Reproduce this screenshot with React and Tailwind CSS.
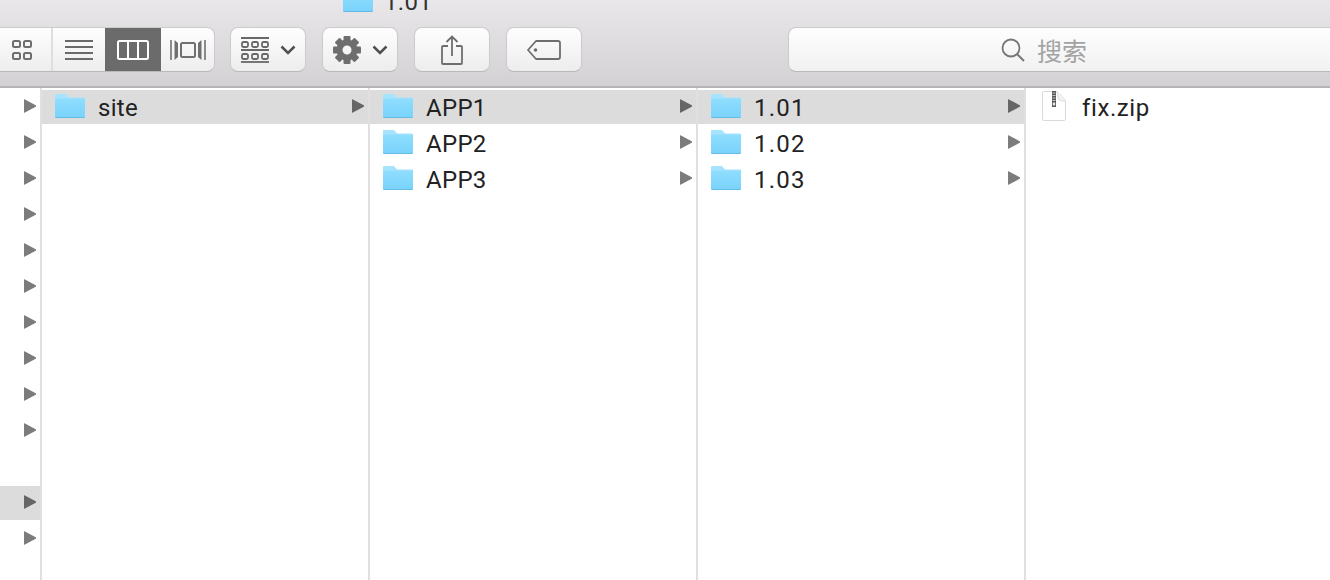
import React from "react";

const sans = "font-['Roboto',Arial,sans-serif]";

const FolderIcon = () => (
  <svg width="30" height="24" viewBox="0 0 30 24" className="mb-[2px] shrink-0">
    <defs>
      <linearGradient id="folderBody" x1="0" y1="0" x2="0" y2="1">
        <stop offset="0" stopColor="#8fdefe" />
        <stop offset="1" stopColor="#79d2fc" />
      </linearGradient>
    </defs>
    <path d="M1 0h10l3 3.500h15a1 1 0 0 1 1 1v18a1 1 0 0 1-1 1H1a1 1 0 0 1-1-1V1a1 1 0 0 1 1-1z" fill="#a6e4fd" />
    <path d="M0 4.500h30v18a1.500 1.500 0 0 1-1.500 1.500H1.500A1.500 1.500 0 0 1 0 22.500z" fill="url(#folderBody)" />
    <path d="M.5 23.500h29" stroke="#64bbe6" strokeWidth="1" />
  </svg>
);

const ZipIcon = () => (
  <svg width="24" height="30" viewBox="0 0 24 30" className="mb-[2px] shrink-0">
    <path d="M2 0.500H15C19 4 21 6 23.500 10V28a1.500 1.500 0 0 1-1.500 1.500H2A1.500 1.500 0 0 1 .5 28V2A1.500 1.500 0 0 1 2 .5z" fill="#fff" stroke="#dadada" />
    <path d="M15 0.500C15.500 5 16 8 17.500 9C19 10 21 10 23.500 10" fill="#f2f2f2" stroke="#dadada" />
    <rect x="10" y="0" width="4" height="16" fill="#555" />
    <path d="M10.500 2h3M10.500 4.500h3M10.500 7h3M10.500 9.500h3" stroke="#e2e2e2" strokeWidth="0.800" />
    <rect x="10.800" y="11.500" width="2.400" height="3" fill="#e8e8e8" />
  </svg>
);

const Triangle = ({ dark }) => (
  <svg width="12" height="14" viewBox="0 0 12 14" className="mb-[2px] shrink-0">
    <path d="M0.500 0.200L11.700 6.300a.8.8 0 0 1 0 1.400L.5 13.800A.4.4 0 0 1 0 13.500V.5A.4.4 0 0 1 .5.200z" fill={dark ? "#666" : "#7c7c7c"} />
  </svg>
);

const Chevron = () => (
  <svg width="16" height="10" viewBox="0 0 16 10">
    <path d="M1.500 1.500L8 8L14.500 1.500" fill="none" stroke="#505050" strokeWidth="2.500" />
  </svg>
);

const GridIcon = () => (
  <svg width="22" height="22" viewBox="0 0 22 22" fill="none" stroke="#6e6e6e" strokeWidth="2">
    <rect x="2" y="2" width="7" height="6" rx="1.500" />
    <rect x="13" y="2" width="7" height="6" rx="1.500" />
    <rect x="2" y="14" width="7" height="6" rx="1.500" />
    <rect x="13" y="14" width="7" height="6" rx="1.500" />
  </svg>
);

const ListIcon = () => (
  <svg width="28" height="20" viewBox="0 0 28 20" stroke="#6a6a6a" strokeWidth="1.800">
    <path d="M0 1h28M0 7h28M0 13h28M0 19h28" />
  </svg>
);

const ColumnsIcon = () => (
  <svg width="32" height="20" viewBox="0 0 32 20" fill="none" stroke="#fff" strokeWidth="2">
    <rect x="1" y="1" width="30" height="18" rx="1.500" />
    <path d="M11 1v18M21 1v18" />
  </svg>
);

const CoverFlowIcon = () => (
  <svg width="36" height="20" viewBox="0 0 36 20" fill="none" stroke="#707070" strokeWidth="1.600">
    <path d="M1 0v20M35 0v20" />
    <path d="M4.500 0L8 3V17L4.500 20zM31.500 0L28 3V17L31.500 20z" fill="#707070" stroke="none" />
    <rect x="11" y="3" width="14" height="14" rx="1.500" strokeWidth="2" />
  </svg>
);

const GroupIcon = () => (
  <svg width="28" height="26" viewBox="0 0 28 26" fill="none" stroke="#686868">
    <path d="M0 1h28M0 13h28" strokeWidth="1.800" />
    <path d="M0 25h28" strokeWidth="1.800" />
    <rect x="1" y="5" width="6" height="5" rx="1.500" strokeWidth="1.800" />
    <rect x="11" y="5" width="6" height="5" rx="1.500" strokeWidth="1.800" />
    <rect x="21" y="5" width="6" height="5" rx="1.500" strokeWidth="1.800" />
    <rect x="1" y="17" width="6" height="5" rx="1.500" strokeWidth="1.800" />
    <rect x="11" y="17" width="6" height="5" rx="1.500" strokeWidth="1.800" />
    <rect x="21" y="17" width="6" height="5" rx="1.500" strokeWidth="1.800" />
  </svg>
);

const GearIcon = () => (
  <svg width="28" height="28" viewBox="0 0 28 28" fill="#6e6e6e">
    {[0, 45, 90, 135, 180, 225, 270, 315].map((deg) => (
      <rect key={deg} x="10.500" y="0" width="7" height="6" rx="1" transform={`rotate(${deg} 14 14)`} />
    ))}
    <circle cx="14" cy="14" r="7.500" fill="none" stroke="#6e6e6e" strokeWidth="6" />
  </svg>
);

const ShareIcon = () => (
  <svg width="22" height="30" viewBox="0 0 22 30" fill="none" stroke="#6e6e6e" strokeWidth="1.800">
    <path d="M7 11H2a1 1 0 0 0-1 1v16a1 1 0 0 0 1 1h18a1 1 0 0 0 1-1V12a1 1 0 0 0-1-1h-5" />
    <path d="M11 21V1.500M5.500 7L11 1.500L16.500 7" />
  </svg>
);

const TagIcon = () => (
  <svg width="34" height="20" viewBox="0 0 34 20" fill="none">
    <path d="M9 1h22a2 2 0 0 1 2 2v14a2 2 0 0 1-2 2H9L1 10z" stroke="#6e6e6e" strokeWidth="1.800" strokeLinejoin="round" />
    <circle cx="8.500" cy="10" r="1.800" fill="#6e6e6e" />
  </svg>
);

const SearchIcon = () => (
  <svg width="24" height="24" viewBox="0 0 24 24" fill="none" stroke="#767676" strokeWidth="1.800">
    <circle cx="10" cy="10" r="8.500" />
    <path d="M16 16L23 23" strokeWidth="2" />
  </svg>
);

const ToolButton = ({ children }) => (
  <div className="flex h-[45px] w-[76px] items-center justify-center gap-[11px] rounded-lg border border-[#cbcbcb] border-b-[#b9b9b9] bg-gradient-to-b from-[#fefefe] to-[#ededed]">
    {children}
  </div>
);

const Row = ({ label, icon, selected, spacing }) => (
  <div className="flex h-9 items-center">
    <div className={`flex h-[34px] w-full items-center pl-[13px] pr-1 ${selected ? "bg-[#dcdcdc]" : ""}`}>
      {icon}
      <span className={`ml-[13px] mt-[2px] flex-1 text-[24px] leading-none text-[#222] ${sans} ${spacing}`}>{label}</span>
      <Triangle dark={selected} />
    </div>
  </div>
);

const sidebarRows = [0, 1, 2, 3, 4, 5, 6, 7, 8, 9, null, 11, 12];

const columns = [
  { rows: ["site"], selected: "site", spacing: "tracking-[0.3px]" },
  { rows: ["APP1", "APP2", "APP3"], selected: "APP1", spacing: "tracking-[0.3px]" },
  { rows: ["1.01", "1.02", "1.03"], selected: "1.01", spacing: "tracking-[1.2px]" },
];

export default function App() {
  return (
    <div className="flex h-[580px] w-[1330px] flex-col overflow-hidden bg-white">
      {/* toolbar */}
      <div className="h-[88px] shrink-0 border-b-2 border-[#b5b5b5] bg-gradient-to-b from-[#e9e7e9] to-[#d3d1d3]">
        <div className="h-[27px] overflow-hidden pl-[343px]">
          <div className="mt-[-12px] flex items-center gap-[11px]">
            <FolderIcon />
            <span className={`mt-[2px] text-[24px] leading-none tracking-[0.3px] text-[#333] ${sans}`}>1.01</span>
          </div>
        </div>

        <div className="flex items-center">
          {/* view switcher runs off the left edge */}
          <div className="ml-[-8px] flex h-[45px] overflow-hidden rounded-lg border border-[#cbcbcb] border-b-[#b9b9b9] bg-gradient-to-b from-[#fefefe] to-[#ededed]">
            <div className="flex w-[60px] items-center justify-center border-r-2 border-[#dedede]">
              <GridIcon />
            </div>
            <div className="flex w-[52px] items-center justify-center">
              <ListIcon />
            </div>
            <div className="flex w-[56px] items-center justify-center bg-[#6b6b6b]">
              <ColumnsIcon />
            </div>
            <div className="flex w-[53px] items-center justify-center">
              <CoverFlowIcon />
            </div>
          </div>

          <div className="ml-[15px] flex gap-4">
            <ToolButton>
              <GroupIcon />
              <Chevron />
            </ToolButton>
            <ToolButton>
              <GearIcon />
              <Chevron />
            </ToolButton>
            <ToolButton>
              <ShareIcon />
            </ToolButton>
            <ToolButton>
              <TagIcon />
            </ToolButton>
          </div>

          <div className="ml-[206px] mr-[-20px] flex h-[45px] flex-1 items-center justify-center gap-[12px] rounded-lg border border-[#cbcbcb] border-b-[#b9b9b9] bg-gradient-to-b from-[#fefefe] to-[#f1f1f1] pr-[50px]">
            <SearchIcon />
            <span className="mt-[2px] font-['Noto_Sans_CJK_SC',sans-serif] text-[25px] leading-none text-[#a3a3a3]">搜索</span>
          </div>
        </div>
      </div>

      {/* column browser */}
      <div className="flex min-h-0 flex-1">
        <div className="w-[42px] shrink-0 border-r-2 border-[#e0e0e0] pt-px">
          {sidebarRows.map((row, i) => (
            <div key={i} className="flex h-9 items-center">
              {row !== null && (
                <div className={`flex h-[34px] w-full items-center justify-end pr-1 ${row === 11 ? "bg-[#dcdcdc]" : ""}`}>
                  <Triangle dark={row === 11} />
                </div>
              )}
            </div>
          ))}
        </div>

        {columns.map((col) => (
          <div key={col.selected} className="w-[328px] shrink-0 border-r-2 border-[#e0e0e0] pt-px">
            {col.rows.map((label) => (
              <Row key={label} label={label} icon={<FolderIcon />} selected={label === col.selected} spacing={col.spacing} />
            ))}
          </div>
        ))}

        <div className="flex-1 pt-px">
          <div className="flex h-9 items-center pl-4">
            <ZipIcon />
            <span className={`ml-4 mt-[2px] text-[24px] leading-none tracking-[0.6px] text-[#222] ${sans}`}>fix.zip</span>
          </div>
        </div>
      </div>
    </div>
  );
}
